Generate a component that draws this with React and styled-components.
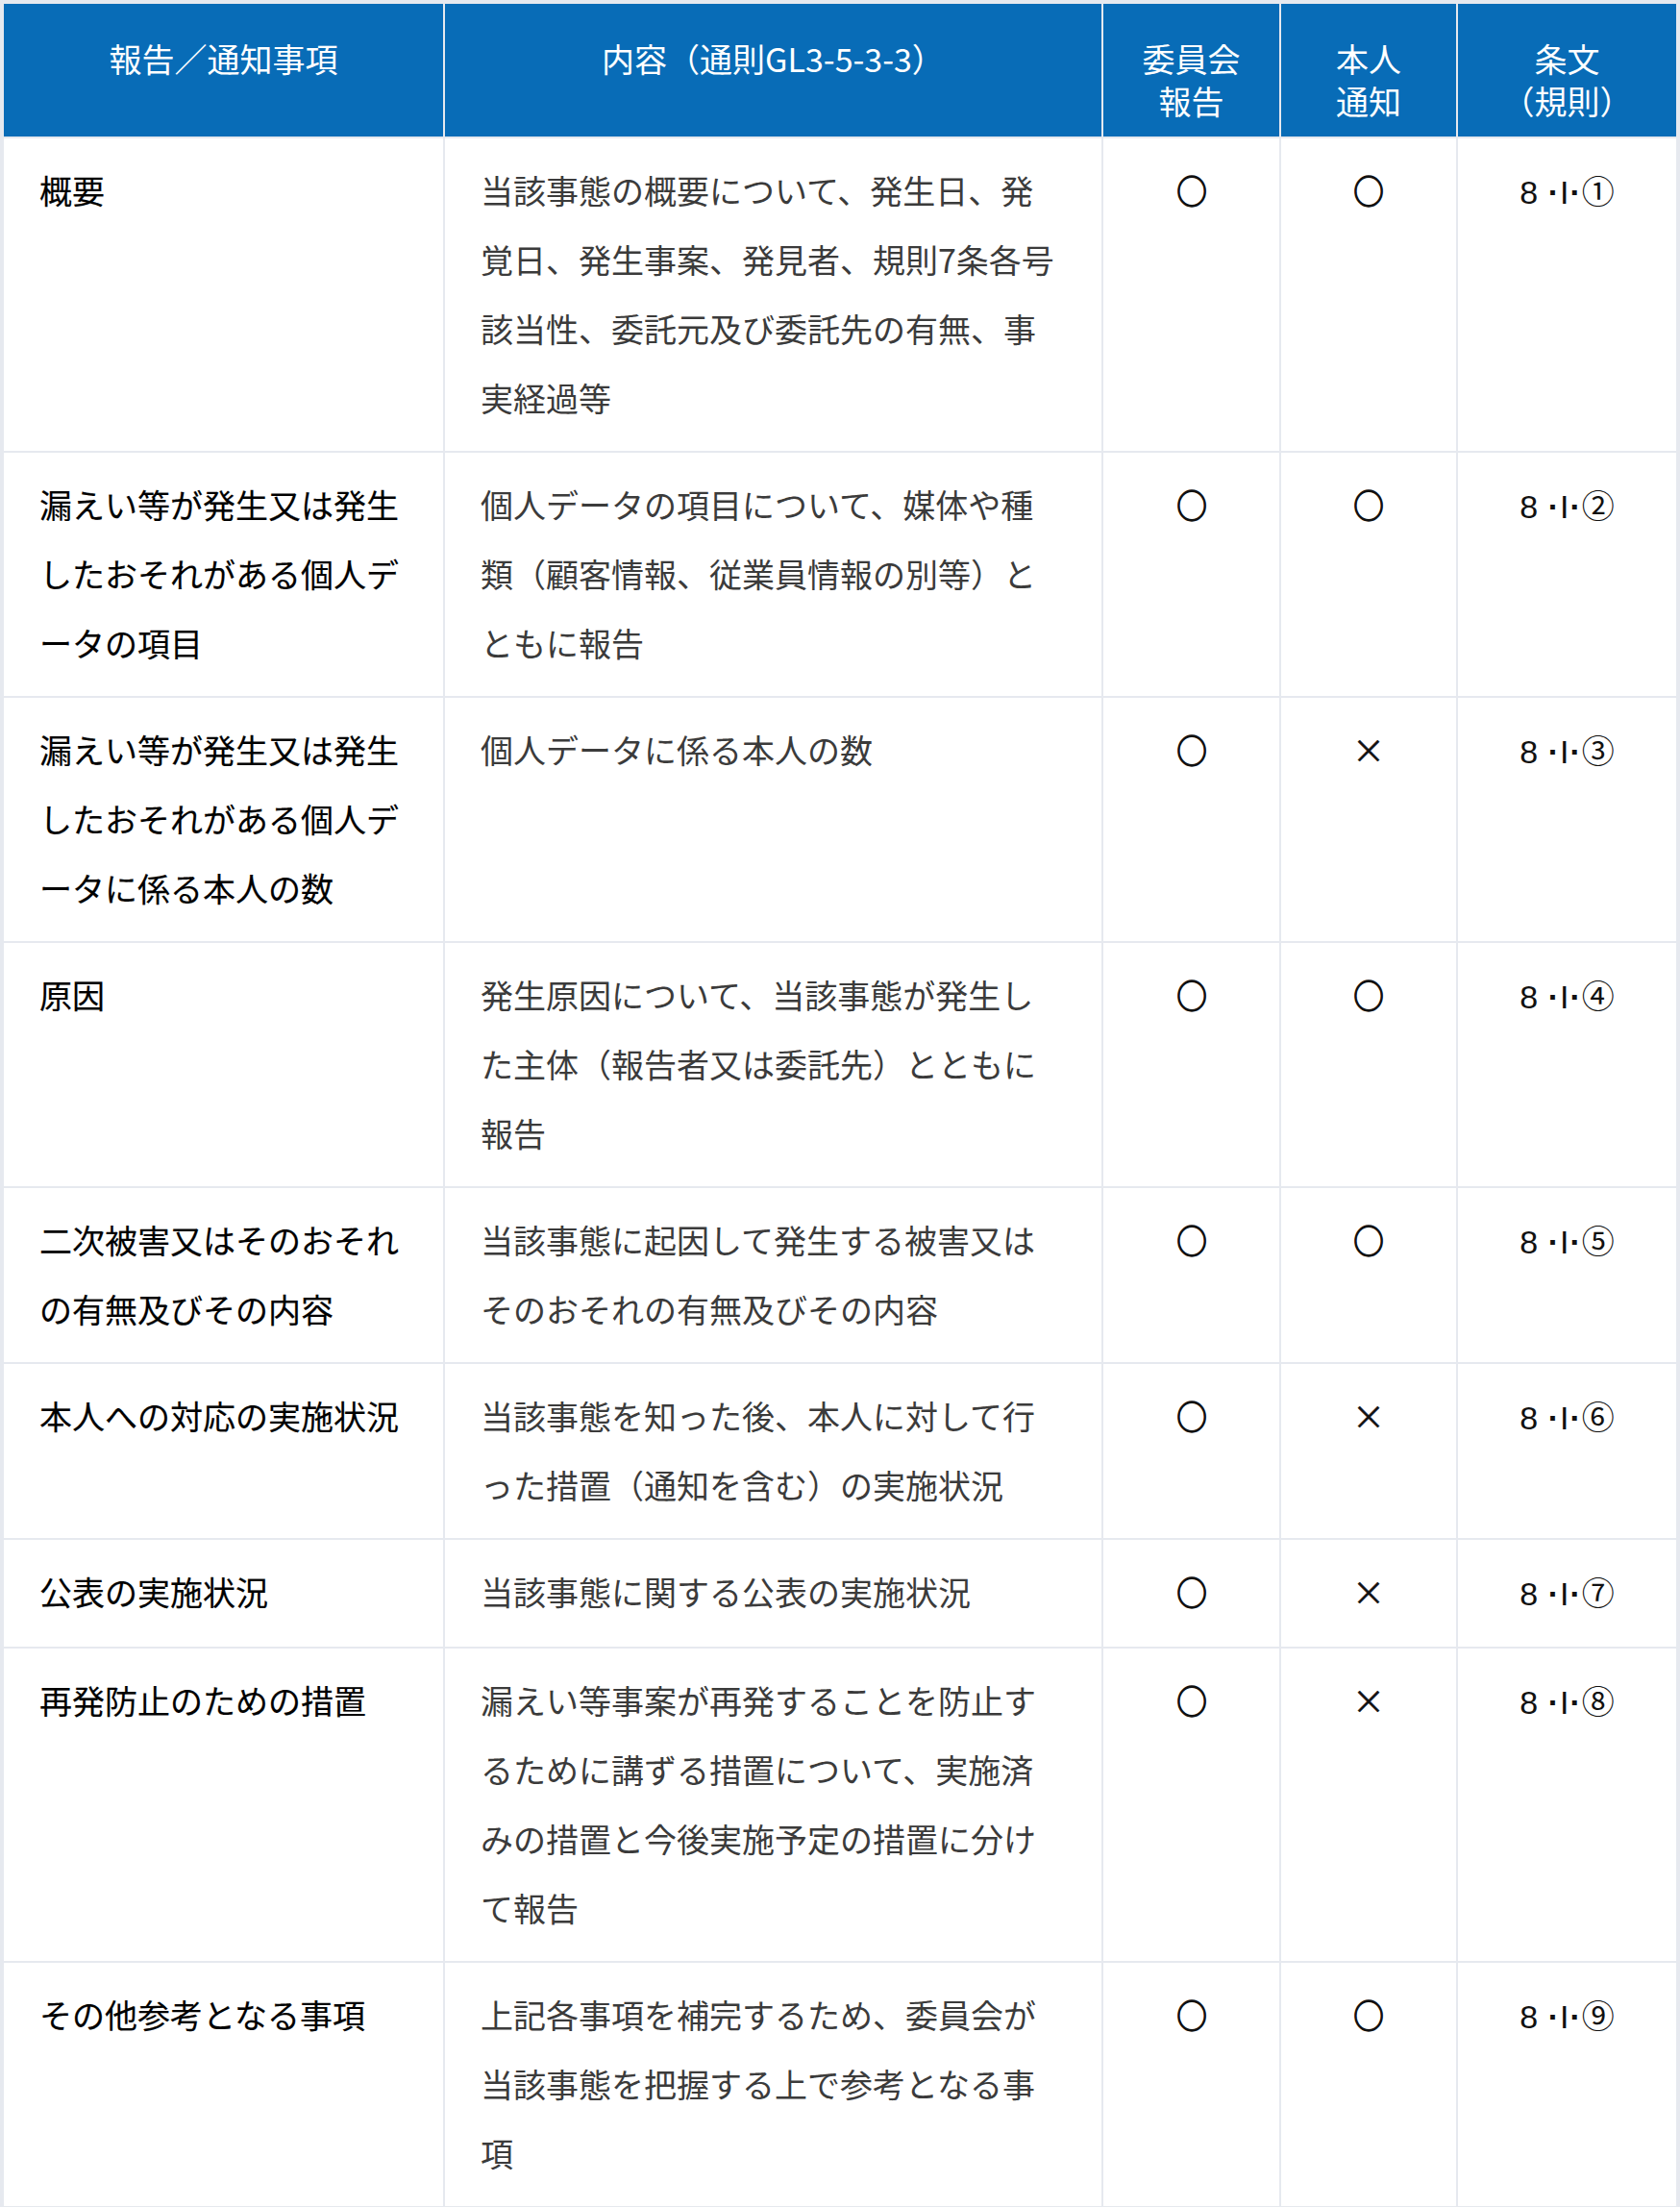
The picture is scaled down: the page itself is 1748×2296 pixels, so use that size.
import React from "react";
import styled, { createGlobalStyle } from "styled-components";

const GlobalStyle = createGlobalStyle`
  html, body {
    margin: 0;
    padding: 0;
    background: #e6e9ef;
  }
  body {
    font-family: "Noto Sans CJK JP", "Noto Sans", sans-serif;
    -webkit-font-smoothing: antialiased;
  }
  * {
    box-sizing: border-box;
  }
`;

const Page = styled.div`
  padding: 2px;
  min-height: 100vh;
  background: #e6e9ef;
`;

const Table = styled.table`
  width: 100%;
  table-layout: fixed;
  border-collapse: separate;
  border-spacing: 2px;
  font-size: 34px;
  line-break: normal;
`;

const HeadCell = styled.th`
  background: #086cb7;
  color: #ffffff;
  font-weight: 400;
  line-height: 44px;
  text-align: center;
  vertical-align: top;
  padding: 35px 8px 15px;
`;

const Cell = styled.td`
  background: #ffffff;
  vertical-align: top;
  line-height: 72px;
  padding: 18px 37px 19px;
  text-align: ${(p) => (p.$mark ? "center" : "left")};
  color: ${(p) => (p.$muted ? "#3b3b3b" : "#000000")};
  font-weight: 400;
  ${(p) => !p.$muted && !p.$mark && "-webkit-text-stroke: 0.15px #000000;"}
  ${(p) => p.$mark && "padding-left: 0; padding-right: 0;"}
`;

const Mark = styled.span`
  display: inline-block;
  color: #111111;
  -webkit-text-stroke: ${(p) => (p.$cross ? "0.5px" : "1.3px")} #111111;
  transform: ${(p) => (p.$cross ? "none" : "scale(0.93, 1)")};
`;

const Clause = styled.span`
  font-family: "Liberation Sans", "Noto Sans CJK JP", sans-serif;
  font-weight: 400;
  color: #111111;
`;

const Sep = styled.span`
  font-weight: 700;
  margin: 0 1px;
`;

const columns = [
  { width: 457, label: ["報告／通知事項"] },
  { width: 683, label: ["内容（通則GL3-5-3-3）"] },
  { width: 183, label: ["委員会", "報告"] },
  { width: 182, label: ["本人", "通知"] },
  { width: 227, label: ["条文", "（規則）"] },
];

const rows = [
  {
    item: "概要",
    content:
      "当該事態の概要について、発生日、発覚日、発生事案、発見者、規則7条各号該当性、委託元及び委託先の有無、事実経過等",
    commission: "○",
    person: "○",
    num: "①",
  },
  {
    item: "漏えい等が発生又は発生したおそれがある個人データの項目",
    content: "個人データの項目について、媒体や種類（顧客情報、従業員情報の別等）とともに報告",
    commission: "○",
    person: "○",
    num: "②",
  },
  {
    item: "漏えい等が発生又は発生したおそれがある個人データに係る本人の数",
    content: "個人データに係る本人の数",
    commission: "○",
    person: "×",
    num: "③",
  },
  {
    item: "原因",
    content: "発生原因について、当該事態が発生した主体（報告者又は委託先）とともに報告",
    commission: "○",
    person: "○",
    num: "④",
  },
  {
    item: "二次被害又はそのおそれの有無及びその内容",
    content: "当該事態に起因して発生する被害又はそのおそれの有無及びその内容",
    commission: "○",
    person: "○",
    num: "⑤",
  },
  {
    item: "本人への対応の実施状況",
    content: "当該事態を知った後、本人に対して行った措置（通知を含む）の実施状況",
    commission: "○",
    person: "×",
    num: "⑥",
  },
  {
    item: "公表の実施状況",
    content: "当該事態に関する公表の実施状況",
    commission: "○",
    person: "×",
    num: "⑦",
  },
  {
    item: "再発防止のための措置",
    content:
      "漏えい等事案が再発することを防止するために講ずる措置について、実施済みの措置と今後実施予定の措置に分けて報告",
    commission: "○",
    person: "×",
    num: "⑧",
  },
  {
    item: "その他参考となる事項",
    content: "上記各事項を補完するため、委員会が当該事態を把握する上で参考となる事項",
    commission: "○",
    person: "○",
    num: "⑨",
  },
];

const App = () => {
  return (
    <>
      <GlobalStyle />
      <Page>
        <Table>
          <colgroup>
            {columns.map((c, i) => (
              <col key={i} style={{ width: c.width }} />
            ))}
          </colgroup>
          <thead>
            <tr>
              {columns.map((c, i) => (
                <HeadCell key={i}>
                  {c.label.map((l, j) => (
                    <React.Fragment key={j}>
                      {j > 0 && <br />}
                      {l}
                    </React.Fragment>
                  ))}
                </HeadCell>
              ))}
            </tr>
          </thead>
          <tbody>
            {rows.map((r, i) => (
              <tr key={i}>
                <Cell>{r.item}</Cell>
                <Cell $muted>{r.content}</Cell>
                <Cell $mark>
                  <Mark $cross={r.commission === "×"}>{r.commission}</Mark>
                </Cell>
                <Cell $mark>
                  <Mark $cross={r.person === "×"}>{r.person}</Mark>
                </Cell>
                <Cell $mark>
                  <Clause>
                    8 <Sep>·</Sep>I<Sep>·</Sep>
                    {r.num}
                  </Clause>
                </Cell>
              </tr>
            ))}
          </tbody>
        </Table>
      </Page>
    </>
  );
};

export default App;
